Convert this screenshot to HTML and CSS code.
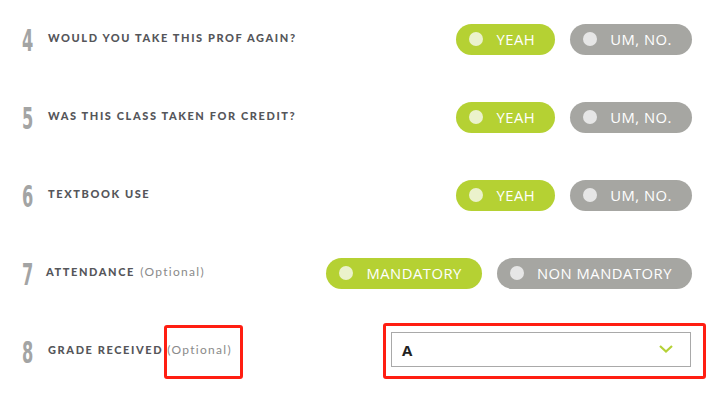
FILE: index.html
```html
<!DOCTYPE html>
<html>
<head>
<meta charset="utf-8">
<link rel="stylesheet" href="styles.css">
</head>
<body>
<div class="form">
  <div class="q">
    <span class="num">4</span>
    <span class="label">WOULD YOU TAKE THIS PROF AGAIN?</span>
    <div class="opts">
      <span class="pill on"><i class="dot"></i>YEAH</span>
      <span class="pill off"><i class="dot"></i>UM, NO.</span>
    </div>
  </div>
  <div class="q">
    <span class="num">5</span>
    <span class="label">WAS THIS CLASS TAKEN FOR CREDIT?</span>
    <div class="opts">
      <span class="pill on"><i class="dot"></i>YEAH</span>
      <span class="pill off"><i class="dot"></i>UM, NO.</span>
    </div>
  </div>
  <div class="q">
    <span class="num">6</span>
    <span class="label">TEXTBOOK USE</span>
    <div class="opts">
      <span class="pill on"><i class="dot"></i>YEAH</span>
      <span class="pill off"><i class="dot"></i>UM, NO.</span>
    </div>
  </div>
  <div class="q">
    <span class="num">7</span>
    <span class="label label-tight">ATTENDANCE <span class="opt">(Optional)</span></span>
    <div class="opts">
      <span class="pill on"><i class="dot"></i>MANDATORY</span>
      <span class="pill off"><i class="dot"></i>NON MANDATORY</span>
    </div>
  </div>
  <div class="q">
    <span class="num">8</span>
    <span class="label">GRADE RECEIVED<span class="opt opt-gap">(Optional)</span></span>
    <div class="select">
      <span class="sel-val">A</span>
      <svg class="chev" width="14" height="8" viewBox="0 0 14 8"><path d="M1 1 L7 6.5 L13 1" fill="none" stroke="#b5d136" stroke-width="2.2"/></svg>
    </div>
  </div>
  <div class="mark mark-a"></div>
  <div class="mark mark-b"></div>
</div>
</body>
</html>
```
FILE: styles.css
```css
html, body {
  margin: 0;
  padding: 0;
  background: #ffffff;
}
.form {
  position: relative;
  width: 727px;
  height: 404px;
  padding-top: 0;
  box-sizing: border-box;
  font-family: "Lato", "Liberation Sans", sans-serif;
}
.q {
  display: flex;
  align-items: center;
  height: 78px;
  padding-left: 22px;
  padding-right: 35px;
}
.num {
  display: inline-block;
  width: 26px;
  flex: none;
  font-family: "DejaVu Sans Condensed", "DejaVu Sans", sans-serif;
  font-weight: 700;
  font-size: 31px;
  line-height: 31px;
  color: #a3a4a4;
  transform: scaleX(0.58);
  transform-origin: left center;
  margin-top: 3px;
}
.label {
  font-weight: 900;
  font-size: 11px;
  letter-spacing: 1.6px;
  color: #55565a;
  margin-top: -3px;
}
.label-tight {
  margin-left: -2px;
}
.opt {
  font-weight: 400;
  font-size: 12px;
  letter-spacing: 1.3px;
  color: #8a8a8a;
  margin-left: 1px;
}
.opt-gap {
  margin-left: 4px;
}
.opts {
  margin-left: auto;
  display: flex;
  gap: 15px;
}
.pill {
  display: flex;
  align-items: center;
  height: 31px;
  border-radius: 16px;
  padding: 0 20px 0 13px;
  font-family: "Open Sans", "Liberation Sans", sans-serif;
  font-size: 14.8px;
  letter-spacing: 0.5px;
  color: #ffffff;
}
.pill.on { background: #b5d133; }
.pill.off { background: #a6a6a2; }
.dot {
  width: 14px;
  height: 14px;
  border-radius: 50%;
  margin-right: 13px;
}
.on .dot { background: #ebf2cc; }
.off .dot { background: #e6e6e6; }
.select {
  margin-left: auto;
  margin-right: 1px;
  width: 300px;
  height: 35px;
  box-sizing: border-box;
  border: 1px solid #a9a9a9;
  display: flex;
  align-items: center;
  justify-content: space-between;
  padding: 0 17px 0 10px;
  margin-top: -3px;
}
.sel-val {
  font-family: "Open Sans", "Liberation Sans", sans-serif;
  font-weight: 700;
  font-size: 15px;
  color: #222;
}
.chev {
  display: block;
  margin-top: -2px;
}
.mark {
  position: absolute;
  border: 3px solid #ff1e12;
  border-radius: 3px;
  box-sizing: border-box;
}
.mark-a {
  left: 164px;
  top: 325px;
  width: 79px;
  height: 54px;
}
.mark-b {
  left: 383px;
  top: 323px;
  width: 323px;
  height: 56px;
}
```
